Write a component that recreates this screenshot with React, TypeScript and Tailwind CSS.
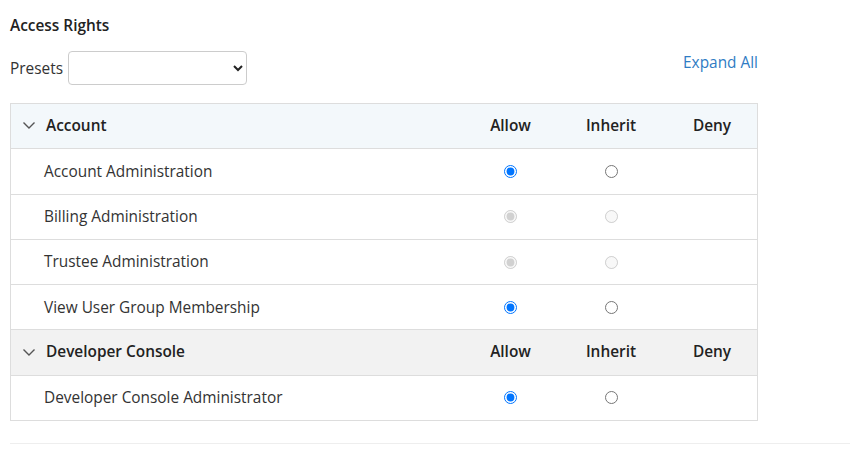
import React from "react";

type Row = { name: string; allow: boolean; disabled?: boolean };

const groups: { title: string; bg: string; rows: Row[] }[] = [
  {
    title: "Account",
    bg: "bg-[#f3f8fb]",
    rows: [
      { name: "Account Administration", allow: true },
      { name: "Billing Administration", allow: true, disabled: true },
      { name: "Trustee Administration", allow: true, disabled: true },
      { name: "View User Group Membership", allow: true },
    ],
  },
  {
    title: "Developer Console",
    bg: "bg-[#f2f2f2]",
    rows: [{ name: "Developer Console Administrator", allow: true }],
  },
];

const cols = ["w-[101px]", "w-[100px]", "w-[96px] pl-[6px]"];

const Chevron = () => (
  <svg width="14" height="12" viewBox="0 0 14 12" className="text-[#555]">
    <path d="M1.5 3.5l5.5 5.5 5.5-5.5" fill="none" stroke="currentColor" strokeWidth="1.4" />
  </svg>
);

export default function App() {
  return (
    <div className="w-[850px] h-[451px] bg-white text-[#222]" style={{ fontFamily: '"Open Sans", sans-serif' }}>
      <div className="px-[10px] pt-[15px]">
        <h2 className="text-[15.4px] font-semibold leading-[22px]">Access Rights</h2>
        <div className="flex items-center mt-[14px] w-[748px]">
          <label className="text-[15.4px] text-[#333] mr-[5px] pt-[2px]">Presets</label>
          <select className="w-[179px] h-[34px] border border-[#ccc] rounded-[4px] bg-white text-[14px] px-2">
            <option></option>
          </select>
          <a className="ml-auto text-[15.4px] text-[#2f7cc4] -mt-[10px]">Expand All</a>
        </div>
        <div className="mt-[18px] w-[748px] border border-[#ddd]">
          {groups.map((g, gi) => (
            <div key={g.title}>
              <div
                className={`flex items-center pb-[2px] ${g.bg} ${gi > 0 ? "h-[45.3px] border-t border-[#ddd]" : "h-[44.3px]"}`}
              >
                <div className="flex-1 flex items-center pl-[11px] gap-[10px]">
                  <Chevron />
                  <span className="text-[15.4px] font-semibold">{g.title}</span>
                </div>
                {["Allow", "Inherit", "Deny"].map((h, i) => (
                  <div key={h} className={`${cols[i]} text-center text-[15.4px] font-semibold`}>{h}</div>
                ))}
              </div>
              {g.rows.map((r) => (
                <div key={r.name} className="flex items-center h-[45.3px] border-t border-[#ddd]">
                  <div className="flex-1 pl-[33px] text-[15.4px] text-[#333]">{r.name}</div>
                  <div className={`${cols[0]} flex justify-center`}>
                    <input type="radio" name={r.name} defaultChecked={r.allow} disabled={r.disabled} className="w-[13px] h-[13px] m-0" />
                  </div>
                  <div className={`${cols[1]} flex justify-center`}>
                    <input type="radio" name={r.name} disabled={r.disabled} className="w-[13px] h-[13px] m-0" />
                  </div>
                  <div className={cols[2]} />
                </div>
              ))}
            </div>
          ))}
        </div>
        <div className="mt-[22px] border-t border-[#eee] -mr-[10px]" />
      </div>
    </div>
  );
}
